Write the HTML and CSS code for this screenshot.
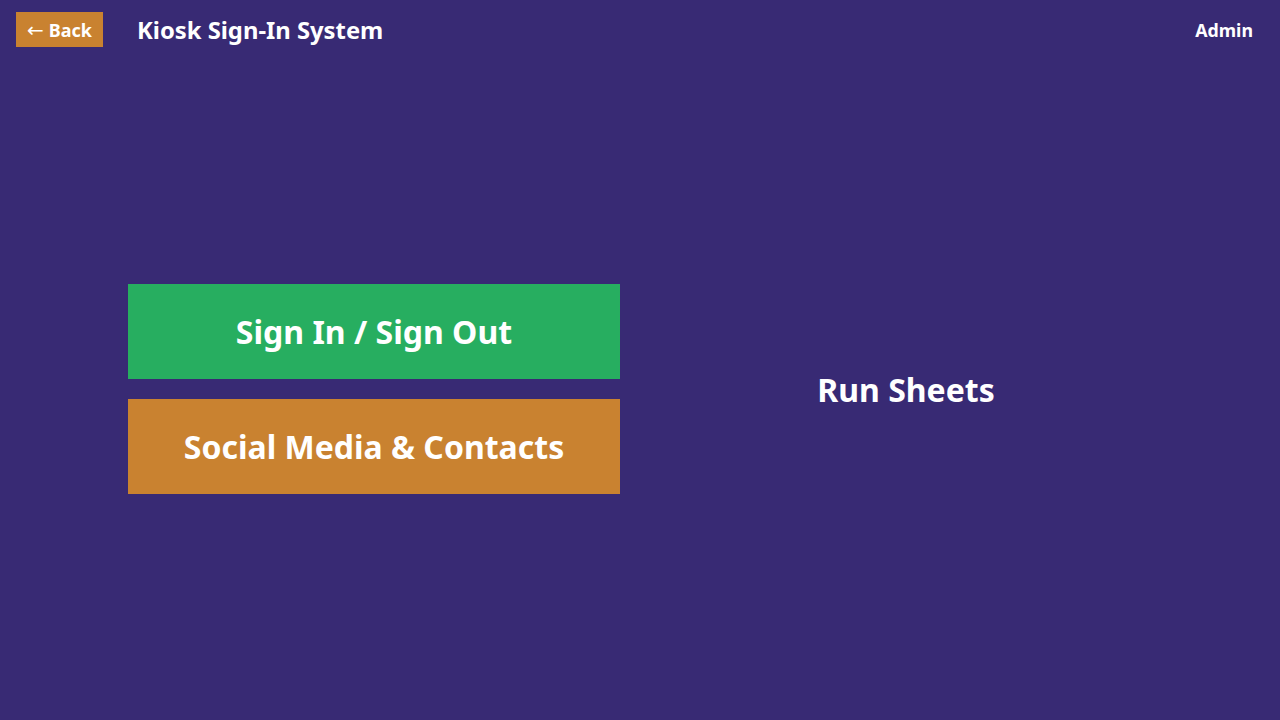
FILE: index.html
```html
<!DOCTYPE html>
<html lang="en">
<head>
    <meta charset="UTF-8">
    <meta name="viewport" content="width=device-width, initial-scale=1">
    <title>Kiosk Sign-In System</title>
    <link rel="stylesheet" href="styles.css">
</head>
<body>
<div class="kiosk">
    <div class="topbar">
        <button class="backbtn"><span class="arrow">&larr;</span> Back</button>
        <h1 class="title">Kiosk Sign-In System</h1>
        <button class="adminbtn">Admin</button>
    </div>
    <div class="main">
        <div class="col">
            <button class="bigbtn green">Sign In / Sign Out</button>
            <button class="bigbtn orange">Social Media &amp; Contacts</button>
        </div>
        <div class="col center">
            <div class="runsheets">Run Sheets</div>
        </div>
    </div>
</div>
</body>
</html>
```

FILE: styles.css
```css
html, body {
    margin: 0;
    height: 100%;
}

body {
    background: #382a74;
    color: #fff;
    font-family: "Noto Sans", sans-serif;
}

.kiosk {
    display: flex;
    flex-direction: column;
    height: 100%;
}

.topbar {
    display: flex;
    align-items: center;
    padding: 12px 16px;
}

.kiosk button {
    font-family: "Noto Sans", sans-serif;
    font-weight: bold;
    color: #fff;
    border: none;
    cursor: pointer;
}

.backbtn {
    background: #c98230;
    font-size: 18px;
    height: 35px;
    padding: 0 11px;
    display: flex;
    align-items: center;
}

.backbtn .arrow {
    font-family: "DejaVu Sans", sans-serif;
    font-weight: normal;
    font-size: 20px;
    margin-right: 5px;
}

.title {
    margin: 0 0 0 34px;
    font-size: 23.8px;
    font-weight: bold;
}

.adminbtn {
    margin-left: auto;
    background: transparent;
    font-size: 17.8px;
    padding: 0 11px 0 12px;
}

.main {
    flex: 1;
    display: flex;
    align-items: center;
    gap: 40px;
    padding: 0 128px 2px 128px;
}

.col {
    flex: 1;
    display: flex;
    flex-direction: column;
    gap: 20px;
}

.col.center {
    align-items: center;
}

.bigbtn {
    height: 95px;
    font-size: 32px;
    padding-top: 2px;
}

.green {
    background: #27ae60;
}

.orange {
    background: #c98230;
}

.runsheets {
    font-size: 32px;
    font-weight: bold;
    margin-top: 2px;
}
```
